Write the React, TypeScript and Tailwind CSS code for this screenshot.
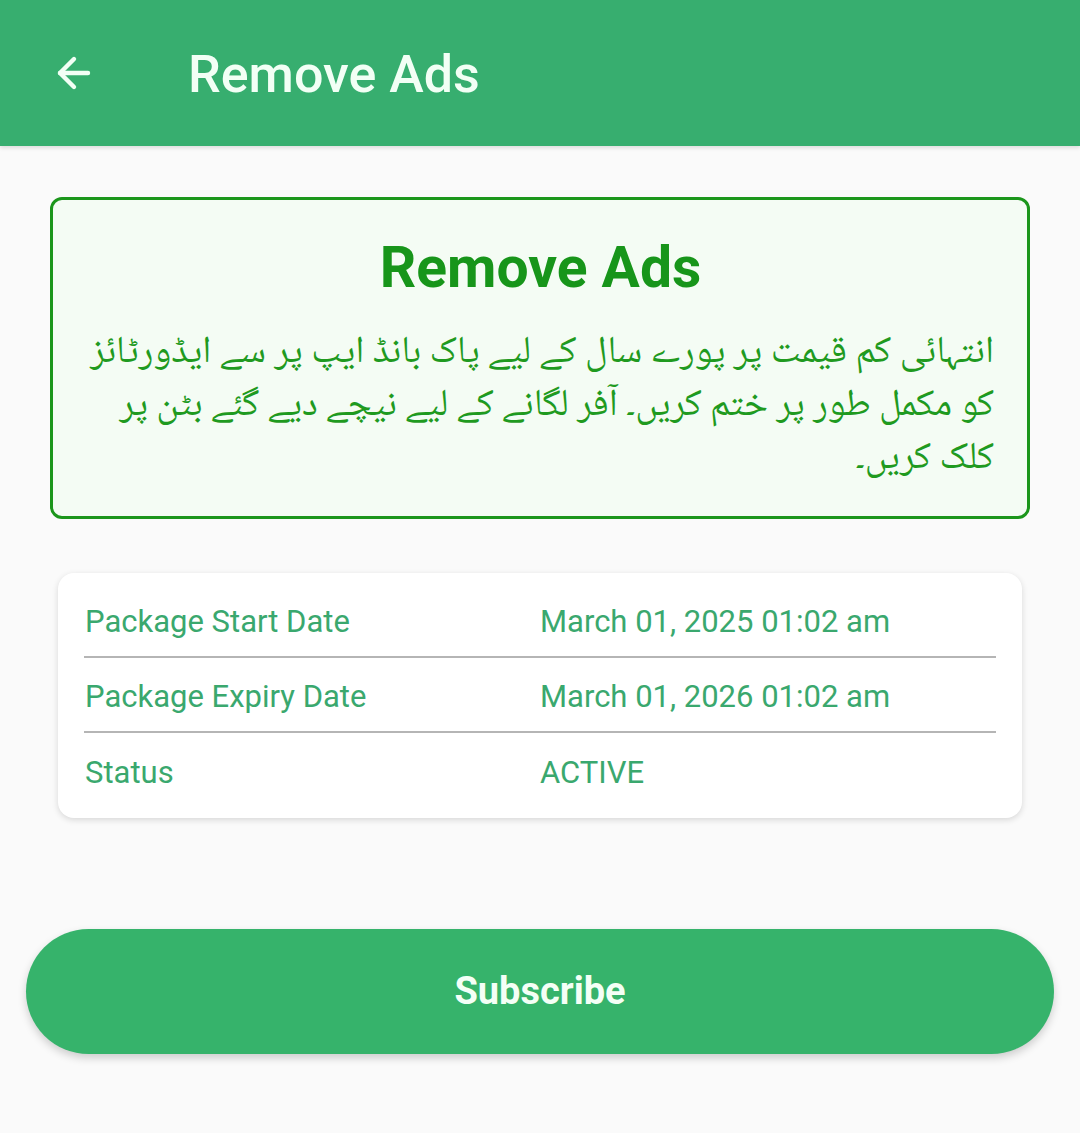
import { ArrowLeft } from "lucide-react";

const rows = [
  { label: "Package Start Date", value: "March 01, 2025 01:02 am" },
  { label: "Package Expiry Date", value: "March 01, 2026 01:02 am" },
  { label: "Status", value: "ACTIVE" },
];

export default function App() {
  return (
    <div className="min-h-[1133px] bg-[#fafafa] font-['Roboto',sans-serif]">
      {/* Top bar */}
      <header className="flex h-[146px] items-center bg-[#37ae6f] pl-[50px] shadow-[0_2px_4px_rgba(0,0,0,0.12)]">
        <ArrowLeft className="h-[48px] w-[48px] text-[#f2fff5]" strokeWidth={2.2} />
        <h1 className="ml-[90px] mt-[4px] text-[52px] font-medium text-[#f2fff5]">Remove Ads</h1>
      </header>

      <main className="px-[50px] pt-[51px]">
        {/* Offer box */}
        <section className="rounded-[12px] border-[3px] border-[#1b961b] bg-[#f4fcf4] pb-[30px] pl-[34px] pr-[33px] pt-[32px]">
          <h2 className="text-center text-[57px] font-bold leading-[72px] text-[#17951a]">Remove Ads</h2>
          <p
            dir="rtl"
            className="mt-[23px] text-right font-['Noto_Naskh_Arabic','Noto_Sans_Arabic','DejaVu_Sans',sans-serif] text-[38px] leading-[53px] text-[#1f9a1f]"
          >
            انتہائی کم قیمت پر پورے سال کے لیے پاک بانڈ ایپ پر سے ایڈورٹائز کو مکمل طور پر ختم کریں۔ آفر لگانے کے لیے نیچے دیے گئے بٹن پر کلک کریں۔
          </p>
        </section>

        {/* Package details */}
        <section className="mx-[8px] mt-[54px] rounded-[16px] bg-white px-[26px] py-[10px] shadow-[0_2px_6px_rgba(0,0,0,0.14)]">
          {rows.map((row, i) => (
            <div
              key={row.label}
              className={`flex h-[75px] items-center pt-[6px] text-[31px] text-[#3aa86e] ${
                i < rows.length - 1 ? "border-b-2 border-[#b5b5b5]" : ""
              }`}
            >
              <span className="w-[456px] pl-[1px]">{row.label}</span>
              <span>{row.value}</span>
            </div>
          ))}
        </section>
      </main>

      {/* Subscribe */}
      <div className="px-[26px] pt-[111px]">
        <button className="h-[125px] w-full rounded-full bg-[#36b36b] text-[38px] font-bold text-[#f4fff6] shadow-[0_4px_8px_rgba(0,0,0,0.18)]">
          Subscribe
        </button>
      </div>
    </div>
  );
}
